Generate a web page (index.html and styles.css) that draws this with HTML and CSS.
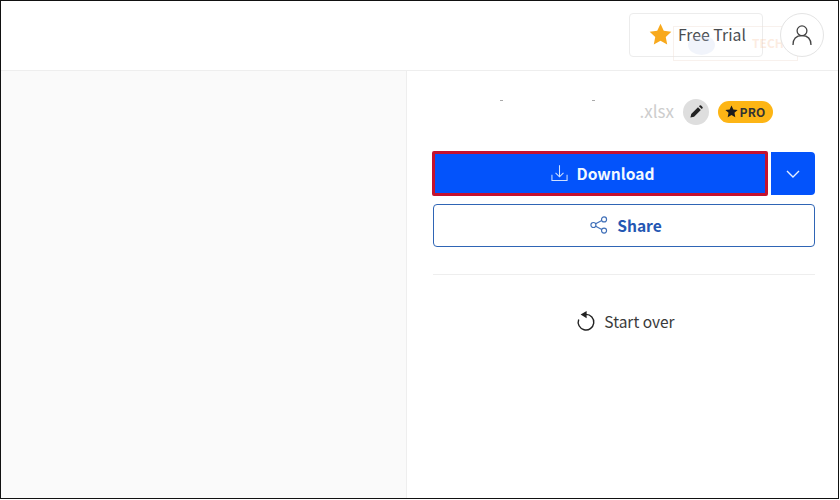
FILE: index.html
```html
<!DOCTYPE html>
<html lang="en">
<head>
<meta charset="utf-8">
<title>Download</title>
<link rel="stylesheet" href="styles.css">
</head>
<body>
<div class="frame">
  <header class="topbar">
    <a class="trial">
      <svg class="star" viewBox="0 0 24 24"><path d="M12 .8l3.4 7.3 7.9 1-5.8 5.4 1.5 7.9-7-3.9-7 3.9 1.5-7.9L.7 9.1l7.9-1z"/></svg>
      <span>Free Trial</span>
    </a>
    <div class="avatar">
      <svg viewBox="0 0 20 20"><circle cx="10" cy="5.8" r="4.9"/><path d="M1 20c0-6.2 3.6-9.3 9-9.3s9 3.1 9 9.3"/></svg>
    </div>
    <div class="watermark"><i></i><b>TECH</b></div>
  </header>
  <main class="content">
    <div class="preview"></div>
    <aside class="side">
      <div class="file">
        <i class="speck speck-a"></i>
        <i class="speck speck-b"></i>
        <span class="ext">.xlsx</span>
        <span class="edit">
          <svg viewBox="0 0 16 16"><path d="M1.5 14.5l.9-3.9 7.2-7.2 3 3-7.2 7.2zM10.6 2.4l.8-.8a1.1 1.1 0 0 1 1.5 0l1.5 1.5a1.1 1.1 0 0 1 0 1.5l-.8.8z"/></svg>
        </span>
        <span class="pro">
          <svg viewBox="0 0 24 24"><path d="M12 .8l3.4 7.3 7.9 1-5.8 5.4 1.5 7.9-7-3.9-7 3.9 1.5-7.9L.7 9.1l7.9-1z"/></svg>PRO
        </span>
      </div>
      <div class="actions">
        <button class="download">
          <svg viewBox="0 0 18 18"><path d="M9 .8v12M4.8 8.8L9 13l4.2-4.2M1 10.8v6.2h16v-6.2"/></svg>
          <span>Download</span>
        </button>
        <button class="more">
          <svg viewBox="0 0 14 8"><path d="M1 1l6 6 6-6"/></svg>
        </button>
      </div>
      <button class="share">
        <svg viewBox="0 0 20 20"><circle cx="3.8" cy="10" r="2.8"/><circle cx="15.6" cy="3.8" r="2.8"/><circle cx="15.6" cy="16.2" r="2.8"/><path d="M6.3 8.7l6.8-3.6M6.3 11.3l6.8 3.6"/></svg>
        <span>Share</span>
      </button>
      <hr class="rule">
      <a class="over">
        <svg viewBox="0 0 18 20"><path class="arc" d="M9 3.4a7.8 7.8 0 1 1-7.3 5"/><path class="tip" d="M9.6 0v7.2L3.6 3.6z"/></svg>
        <span>Start over</span>
      </a>
    </aside>
  </main>
</div>
</body>
</html>
```

FILE: styles.css
```css
* { box-sizing: border-box; }
html, body { margin: 0; padding: 0; background: #fff; }
body { width: 840px; height: 500px; overflow: hidden; font-family: "Noto Sans CJK JP", "Noto Sans", sans-serif; }
.frame { width: 839px; height: 499px; border: 1px solid #111; display: flex; flex-direction: column; background: #fff; }

.topbar { position: relative; height: 70px; flex: none; border-bottom: 1px solid #eee; display: flex; align-items: center; justify-content: flex-end; padding-right: 14px; padding-top: 1px; }
.trial { width: 134px; height: 44px; margin-top: -2px; margin-right: 17px; border: 1px solid #ececec; border-radius: 4px; display: flex; align-items: center; gap: 6px; padding-left: 19px; padding-bottom: 2px; font-size: 15.8px; color: #4a4d50; }
.star { width: 23px; height: 23px; fill: #f8a91c; margin-top: 1px; }
.avatar { width: 44px; height: 44px; margin-top: -2px; border: 1px solid #e4e4e4; border-radius: 50%; display: flex; align-items: center; justify-content: center; background: #fff; position: relative; z-index: 1; }
.avatar svg { width: 20px; height: 20px; fill: none; stroke: #444; stroke-width: 1.3; overflow: visible; }
.watermark { position: absolute; left: 672px; top: 25px; width: 125px; height: 35px; border: 1px solid rgba(240,225,215,.45); }
.watermark i { position: absolute; left: 14px; top: 8px; width: 27px; height: 20px; border-radius: 50%; background: rgba(190,205,235,.22); }
.watermark b { position: absolute; left: 78px; top: 8px; font-size: 12px; line-height: 15px; color: rgba(245,190,150,.3); }

.content { flex: 1; display: flex; min-height: 0; }
.preview { width: 406px; flex: none; background: #fafafa; border-right: 1px solid #eee; }
.side { flex: 1; padding: 27px 23px 0 26px; display: flex; flex-direction: column; }

.file { position: relative; height: 27px; display: flex; align-items: center; justify-content: flex-end; padding-right: 42px; }
.speck { position: absolute; top: 2px; width: 3px; height: 1px; background: #aaa; }
.speck-a { left: 67px; }
.speck-b { left: 159px; }
.ext { font-size: 17px; line-height: 23px; color: #cdcdcd; margin-right: 9px; margin-top: -3px; }
.edit { width: 26px; height: 26px; border-radius: 50%; background: #dedede; display: flex; align-items: center; justify-content: center; margin-right: 9px; }
.edit svg { width: 15px; height: 15px; fill: #222; }
.pro { width: 55px; height: 22px; border-radius: 11px; background: #fdb515; display: flex; align-items: center; justify-content: center; gap: 1px; font-size: 12px; font-weight: 700; color: #333; letter-spacing: .2px; }
.pro svg { width: 13px; height: 13px; fill: #1c1c1c; }

button { font-family: inherit; cursor: pointer; }
.actions { display: flex; margin-top: 26px; gap: 3px; align-items: center; margin-left: -1px; }
.download { width: 336px; height: 45px; background: #0353fb; border: 3px solid #c4122f; border-radius: 2px; color: #f2f8ff; font-size: 15.6px; font-weight: 700; display: flex; align-items: center; justify-content: center; gap: 9px; padding: 0 0 2px 5px; }
.download svg { width: 17px; height: 18px; fill: none; stroke: #cfe0ff; stroke-width: 1.1; }
.more { width: 44px; height: 43px; background: #0353fb; border: 0; border-radius: 0 4px 4px 0; display: flex; align-items: center; justify-content: center; padding: 0; }
.more svg { width: 14px; height: 8px; fill: none; stroke: #e6efff; stroke-width: 1.4; }

.share { width: 382px; height: 43px; margin-top: 8px; flex: none; background: #fff; border: 1px solid #2f65b5; border-radius: 4px; color: #2457b3; font-size: 15.6px; font-weight: 700; display: flex; align-items: center; justify-content: center; gap: 9px; padding: 0 0 2px 4px; }
.share svg { width: 18px; height: 18px; fill: none; stroke: #3f6fb8; stroke-width: 1.3; }

.rule { width: 382px; height: 1px; margin: 27px 0 0; border: 0; background: #eee; }
.over { margin-top: 35px; display: flex; align-items: center; justify-content: center; gap: 9px; font-size: 15.5px; color: #3a3a3a; padding-left: 4px; }
.over svg { width: 18px; height: 20px; overflow: visible; }
.arc { fill: none; stroke: #222; stroke-width: 1.4; }
.tip { fill: #222; }
```
